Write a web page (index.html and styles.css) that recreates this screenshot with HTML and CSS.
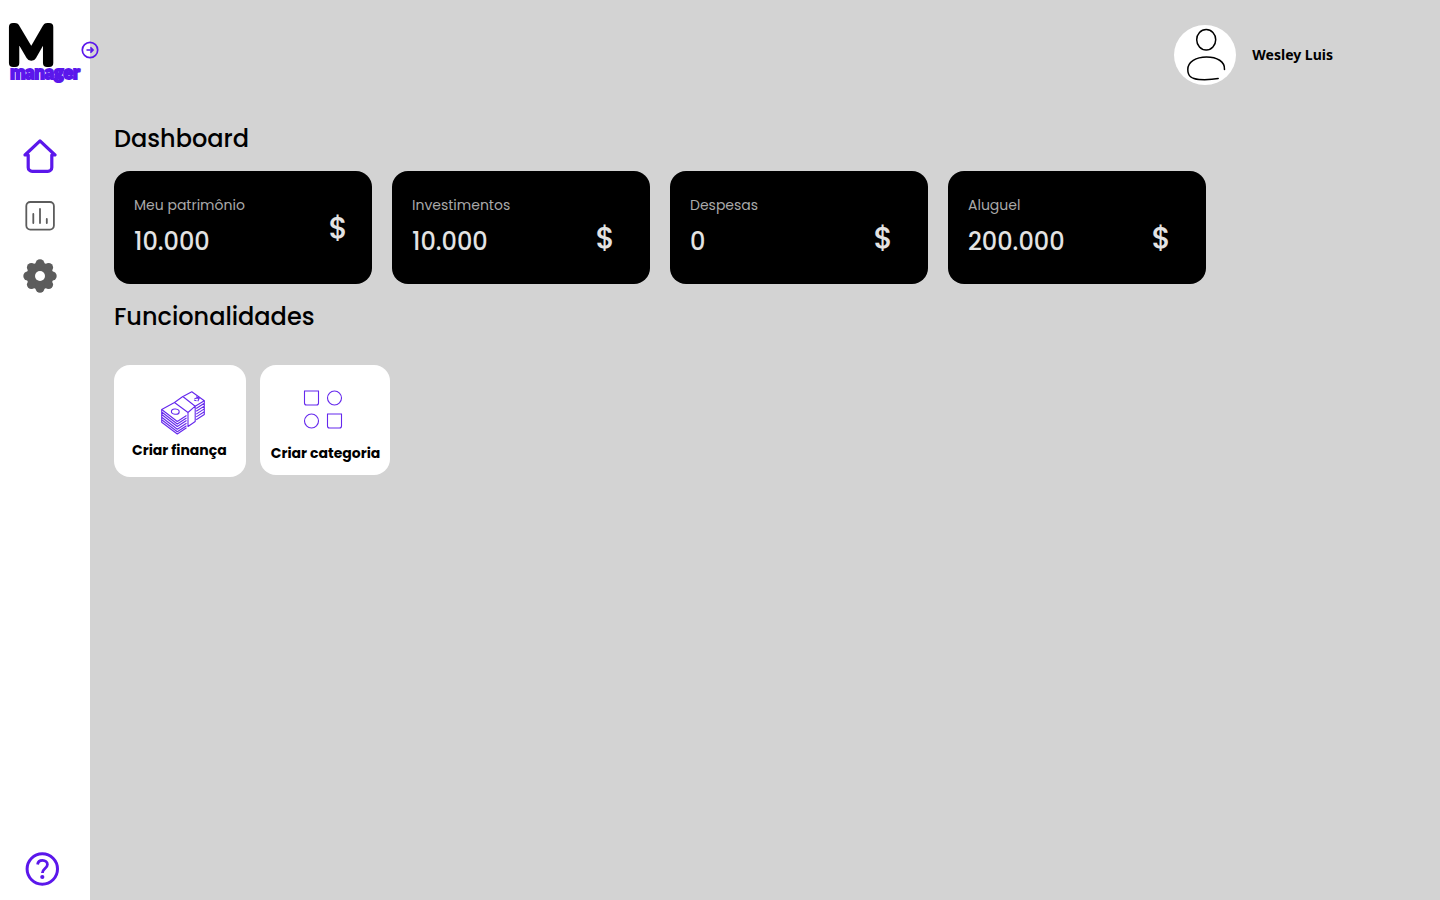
FILE: index.html
```
<!DOCTYPE html>
<html lang="pt-BR">
<head>
<meta charset="utf-8">
<meta name="viewport" content="width=device-width, initial-scale=1">
<title>Manager - Dashboard</title>
<link rel="stylesheet" href="styles.css">
</head>
<body>
<div class="app">
  <aside class="sidebar">
    <svg class="logo" viewBox="0 0 90 90" role="img" aria-label="M manager">
      <text class="logo-letter" x="31" y="63" text-anchor="middle">M</text>
      <text class="logo-word" x="45" y="79" text-anchor="middle">manager</text>
    </svg>
    <button class="toggle" type="button" aria-label="Expandir menu">
      <svg viewBox="0 0 18 18" width="18" height="18"><circle cx="9" cy="9" r="7.7" fill="none" stroke="#5b17eb" stroke-width="1.7"/><path d="M5.5 9H12M9.4 6.4 12 9l-2.6 2.6" fill="none" stroke="#5b17eb" stroke-width="1.7"/></svg>
    </button>
    <nav class="menu">
      <a href="#" aria-label="Início">
        <svg viewBox="0 0 34 34" width="34" height="34" fill="none" stroke="#5b17eb" stroke-width="3.2" stroke-linecap="round" stroke-linejoin="round"><path d="M5.200 16v12.400a4 4 0 0 0 4 4h15.600a4 4 0 0 0 4-4V16M5.200 16H2L17 1.900 32 16h-3.200"/></svg>
      </a>
      <a href="#" aria-label="Relatórios">
        <svg viewBox="0 0 34 34" width="34" height="34" fill="none" stroke="#5c5c5c" stroke-width="1.8" stroke-linecap="round"><rect x="3.300" y="3" width="27.600" height="27.600" rx="4"/><path d="M10.300 15v9M17 10v14M23.800 20v4"/></svg>
      </a>
      <a href="#" aria-label="Configurações">
        <svg viewBox="0 0 34 34" width="34" height="34" fill="#5c5c5c"><circle cx="17" cy="17" r="13.500"/><circle cx="17" cy="4.800" r="4.500"/><circle cx="17" cy="29.200" r="4.500"/><circle cx="4.800" cy="17" r="4.500"/><circle cx="29.200" cy="17" r="4.500"/><circle cx="8.400" cy="8.400" r="4.500"/><circle cx="25.600" cy="8.400" r="4.500"/><circle cx="8.400" cy="25.600" r="4.500"/><circle cx="25.600" cy="25.600" r="4.500"/><circle cx="17" cy="17" r="5" fill="#fff"/></svg>
      </a>
    </nav>
    <a class="help" href="#" aria-label="Ajuda">
      <svg viewBox="0 0 34 34" width="34" height="34" fill="none" stroke="#5b17eb"><circle cx="17.300" cy="17" r="15.200" stroke-width="3"/><path d="M12.600 12.500c.3-2.700 2.100-4.200 4.900-4.200 2.900 0 4.900 1.700 4.900 4.200 0 4-5 4.100-5 8.500" stroke-width="2.800"/><circle cx="17.300" cy="25" r="2.100" fill="#5b17eb" stroke="none"/></svg>
    </a>
  </aside>

  <main class="content">
    <header class="topbar">
      <svg class="avatar" viewBox="0 0 62 60" width="62" height="60" aria-hidden="true"><ellipse cx="31" cy="30" rx="31" ry="30" fill="#fff"/><g fill="none" stroke="#000" stroke-width="1.500" stroke-linecap="round"><ellipse cx="32.200" cy="14.800" rx="9.500" ry="10.200"/><path d="M50.500 44.500C51 36.500 43 32 32.500 32S13.800 37 13.800 44.500C13.800 51.500 17.500 54 25 54.500c6.500.3 13 .2 19.200-1"/></g></svg>
      <span class="user-name">Wesley Luis</span>
    </header>

    <section class="summary">
      <h1 class="title">Dashboard</h1>
      <div class="cards">
        <article class="card card-main"><div><p class="label">Meu patrimônio</p><p class="value">10.000</p></div><span class="currency">$</span></article>
        <article class="card"><div><p class="label">Investimentos</p><p class="value">10.000</p></div><span class="currency">$</span></article>
        <article class="card"><div><p class="label">Despesas</p><p class="value">0</p></div><span class="currency">$</span></article>
        <article class="card"><div><p class="label">Aluguel</p><p class="value">200.000</p></div><span class="currency">$</span></article>
      </div>
    </section>

    <section class="features">
      <h2 class="title">Funcionalidades</h2>
      <div class="actions">
        <button class="action action-finance" type="button">
          <svg viewBox="-7 0 51 44" width="51" height="44" fill="none" stroke="#6528ed" stroke-width="1.100" stroke-linejoin="round">
            <path d="M13.500 11.500.7 18.500 16.300 30.500 25.500 24.500M13.500 11.500 27 21.500V35.500L34.200 30.500V15.200L21.800 5.500ZM27 21.500 34.200 15.200M22 5.500 30.800.7 43.300 9.800 34.200 15.200"/>
            <path d="M.7 18.500v2.500l15.600 12 9.200-6M.7 21v2.500l15.600 12 9.200-6M.7 23.700v2.500l15.600 12 9.200-6M.7 26.300v2.500l15.600 12 9.200-6M.7 29v2.200L16.300 43l9.200-6.300"/>
            <path d="M43.300 9.800v2.500l-8.100 5.200M43.300 12.600v2.500l-8.100 5.200M43.300 15.400v2.500l-8.100 5.200M43.300 18.200v2.500l-8.100 5.200M43.300 21v2.500l-8.100 5.200"/>
            <ellipse cx="14.300" cy="20.600" rx="3.900" ry="2.600" transform="rotate(8 14.300 20.600)"/>
            <path d="m33.500 7.500 4.800-.5-1.500 3.300M35 5.800l3.300 1.200M33 9l2.500.8"/>
          </svg>
          <span>Criar finança</span>
        </button>
        <button class="action action-category" type="button">
          <svg viewBox="0 0 49 44" width="49" height="44" fill="none" stroke="#6528ed" stroke-width="1.100"><path d="M3.500 4h14v12a2 2 0 0 1-2 2h-10a2 2 0 0 1-2-2ZM26.500 27h14v12a2 2 0 0 1-2 2h-10a2 2 0 0 1-2-2Z"/><circle cx="33.500" cy="11" r="7"/><circle cx="10.500" cy="34" r="7"/></svg>
          <span>Criar categoria</span>
        </button>
      </div>
    </section>
  </main>
</div>
</body>
</html>
```
FILE: styles.css
```
* { box-sizing: border-box; }

body {
  margin: 0;
  background: #d3d3d3;
  color: #000;
  font-family: Poppins, Inter, sans-serif;
}

p, h1, h2 { margin: 0; }

button {
  border: 0;
  padding: 0;
  color: inherit;
  font: inherit;
  cursor: pointer;
}

svg { display: block; }

.app {
  display: flex;
  min-height: 100vh;
}

.sidebar {
  position: sticky;
  top: 0;
  display: flex;
  flex: 0 0 90px;
  flex-direction: column;
  height: 100vh;
  padding-bottom: 14px;
  background: #fff;
}

.logo { width: 100%; }

.logo-letter {
  font-family: Lato, sans-serif;
  font-size: 52px;
  font-weight: 300;
  stroke: #000;
  stroke-width: 8px;
  stroke-linejoin: round;
}

.logo-word {
  fill: #5b17eb;
  font-family: Lato, sans-serif;
  font-size: 18px;
  font-weight: 900;
  stroke: #5b17eb;
  stroke-width: 2px;
}

.toggle {
  position: absolute;
  top: 41px;
  right: -9px;
  border-radius: 50%;
  background: none;
}

.menu {
  display: flex;
  flex-direction: column;
  gap: 26px;
  margin: 49px 0 0 23px;
}

.menu a, .help { width: 34px; }

.help { margin: auto 0 0 25px; }

.content {
  flex: 1;
  min-width: 0;
  padding: 25px 24px 24px;
}

.topbar {
  display: flex;
  align-items: center;
  justify-content: flex-end;
  gap: 16px;
  padding-right: 83px;
}

.user-name {
  font: bold 14px/20px "Noto Sans", sans-serif;
}

.title {
  font-size: 24px;
  font-weight: 500;
  line-height: 36px;
}

.summary { margin-top: 36px; }

.cards {
  display: flex;
  flex-wrap: wrap;
  gap: 20px;
  margin-top: 14px;
}

.card {
  display: flex;
  align-items: center;
  justify-content: space-between;
  width: 258px;
  padding: 22px 35px 24px 20px;
  border-radius: 16px;
  background: #000;
}

.card-main { padding-right: 24px; }

.label {
  color: #a9a9a9;
  font-size: 14px;
  font-weight: 400;
  line-height: 24px;
}

.value {
  margin-top: 7px;
  color: #e3e3e3;
  font-size: 24px;
  font-weight: 500;
  line-height: 36px;
}

.currency {
  align-self: flex-end;
  color: #e3e3e3;
  font-size: 30px;
  font-weight: 500;
  line-height: 44px;
}

.card-main .currency {
  align-self: center;
  padding-top: 2px;
}

.features { margin-top: 15px; }

.actions {
  display: flex;
  flex-wrap: wrap;
  align-items: flex-start;
  gap: 14px;
  margin-top: 30px;
}

.action {
  display: flex;
  flex-direction: column;
  align-items: center;
  border-radius: 16px;
  background: #fff;
  font-size: 14px;
  font-weight: 700;
  line-height: 20px;
}

.action-finance {
  gap: 5px;
  padding: 26px 19px 17px 18px;
}

.action-category {
  gap: 12px;
  padding: 22px 10px 12px 11px;
}
```
